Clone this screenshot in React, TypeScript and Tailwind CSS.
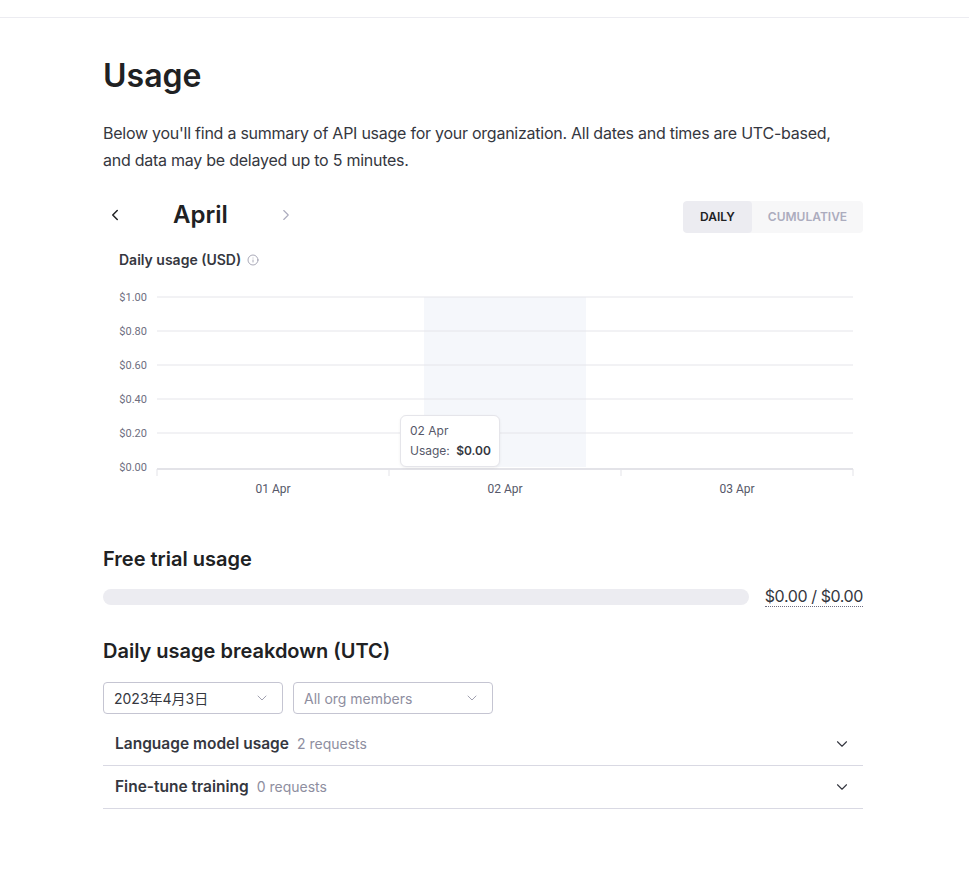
import { ChevronLeft, ChevronRight, ChevronDown, Info } from "lucide-react";

const FONT = { fontFamily: "Inter, 'Noto Sans CJK JP', sans-serif" };

const Y_TICKS = ["$1.00", "$0.80", "$0.60", "$0.40", "$0.20", "$0.00"];
const X_TICKS = ["01 Apr", "02 Apr", "03 Apr"];

function UsageChart() {
  // chart coords are relative to the svg box (x 103 .. 863)
  const left = 54;
  const right = 750;
  const top = 14;
  const step = 34;
  const bottom = top + step * 5;
  const band = (right - left) / 3;

  return (
    <div className="relative h-[230px] w-full">
      <svg width="760" height="230" className="block" style={{ fontFamily: "Roboto, sans-serif" }}>
        {/* hovered day band */}
        <rect x={321} y={top} width={162} height={bottom - top} fill="#f5f7fb" />
        {Y_TICKS.map((t, i) => (
          <g key={t}>
            <text x={44} y={top + i * step + 4} textAnchor="end" fontSize="11" fill="#6e6e80">
              {t}
            </text>
            {i < 5 && <line x1={left} x2={right} y1={top + i * step} y2={top + i * step} stroke="#e5e5ea" strokeWidth="1" />}
          </g>
        ))}
        <line x1={left} x2={right} y1={bottom + 2} y2={bottom + 2} stroke="#e3e3e8" strokeWidth="2" />
        {[0, 1, 2, 3].map((i) => (
          <line key={i} x1={left + i * band} x2={left + i * band} y1={bottom + 2} y2={bottom + 9} stroke="#e3e3e8" strokeWidth="1" />
        ))}
        {X_TICKS.map((t, i) => (
          <text key={t} x={left + band * i + band / 2} y={bottom + 26} textAnchor="middle" fontSize="12" fill="#565869">
            {t}
          </text>
        ))}
      </svg>
      <div className="absolute left-[297px] top-[132px] w-[100px] whitespace-nowrap rounded-md border border-[#e5e5ea] bg-white px-[9px] py-[5px] text-[12px] leading-[20px] text-[#565869] shadow-[0_1px_3px_rgba(0,0,0,0.06)]">
        <div>02 Apr</div>
        <div>
          Usage: <span className="ml-[3px] font-semibold text-[#353740]">$0.00</span>
        </div>
      </div>
    </div>
  );
}

function Select({ value, placeholder, width }: { value?: string; placeholder?: string; width: string }) {
  return (
    <div className={`flex h-8 items-center justify-between rounded border border-[#c5c5d2] bg-white pl-[10px] pr-[12px] text-[14px] ${width}`}>
      <span className={value ? "text-[#353740]" : "text-[#8e8ea0]"}>{value ?? placeholder}</span>
      <ChevronDown size={16} strokeWidth={1.25} className="text-[#8e8ea0]" />
    </div>
  );
}

function BreakdownRow({ title, count }: { title: string; count: string }) {
  return (
    <div className="flex h-[43px] items-center justify-between border-b border-[#d9d9e3] pl-3 pr-3">
      <div className="flex items-baseline gap-2">
        <span className="text-[15.5px] font-semibold text-[#353740]">{title}</span>
        <span className="text-[14px] text-[#8e8ea0]">{count}</span>
      </div>
      <ChevronDown size={18} strokeWidth={1.5} className="text-[#353740]" />
    </div>
  );
}

export default function App() {
  return (
    <div className="min-h-[888px] bg-white text-[#353740]" style={FONT}>
      <div className="h-[18px] border-b border-[#ececf1]" />
      <div className="ml-[103px] w-[760px] pt-[38px]">
        <h1 className="text-[32px] font-semibold leading-[40px] text-[#202123]">Usage</h1>
        <p className="mt-[24px] max-w-[740px] text-[16px] leading-[27px] tracking-[-0.25px] text-[#353740]">
          Below you'll find a summary of API usage for your organization. All dates and times are UTC-based, and data may be
          delayed up to 5 minutes.
        </p>

        <div className="mt-[27px] flex h-8 items-center justify-between">
          <div className="-mt-1 flex items-center">
            <button className="flex w-[24px] items-center justify-center text-[#202123]">
              <ChevronLeft size={18} strokeWidth={2} />
            </button>
            <span className="ml-[46px] w-[104px] text-[24px] font-semibold text-[#202123]">April</span>
            <button className="flex items-center text-[#acacbe]">
              <ChevronRight size={18} strokeWidth={1.5} />
            </button>
          </div>
          <div className="flex h-8 overflow-hidden rounded-[4px] bg-[#f7f7f8] text-[12px] font-semibold">
            <div className="flex w-[69px] items-center justify-center rounded-[4px] bg-[#ececf1] text-[#202123]">DAILY</div>
            <div className="flex w-[111px] items-center justify-center text-[#acacbe]">CUMULATIVE</div>
          </div>
        </div>

        <div className="mt-[16px] flex items-center gap-[6px] pl-4">
          <span className="text-[14px] font-semibold text-[#353740]">Daily usage (USD)</span>
          <Info size={12} strokeWidth={1.5} className="text-[#8e8ea0]" />
        </div>

        <div className="mt-[13px]">
          <UsageChart />
        </div>

        <h2 className="mt-[32px] text-[20px] font-semibold leading-[28px] text-[#202123]">Free trial usage</h2>
        <div className="mt-[13px] flex items-center gap-4">
          <div className="h-4 flex-1 rounded-full bg-[#ececf1]" />
          <span className="border-b border-dotted border-[#6e6e80] text-[16px] leading-[20px] tracking-[-0.4px] text-[#353740]">
            $0.00 / $0.00
          </span>
        </div>

        <h2 className="mt-[30px] text-[20px] font-semibold leading-[28px] text-[#202123]">Daily usage breakdown (UTC)</h2>
        <div className="mt-[17px] flex gap-[10px]">
          <Select value="2023年4月3日" width="w-[180px]" />
          <Select placeholder="All org members" width="w-[200px]" />
        </div>
        <div className="mt-[9px]">
          <BreakdownRow title="Language model usage" count="2 requests" />
          <BreakdownRow title="Fine-tune training" count="0 requests" />
        </div>
      </div>
    </div>
  );
}
